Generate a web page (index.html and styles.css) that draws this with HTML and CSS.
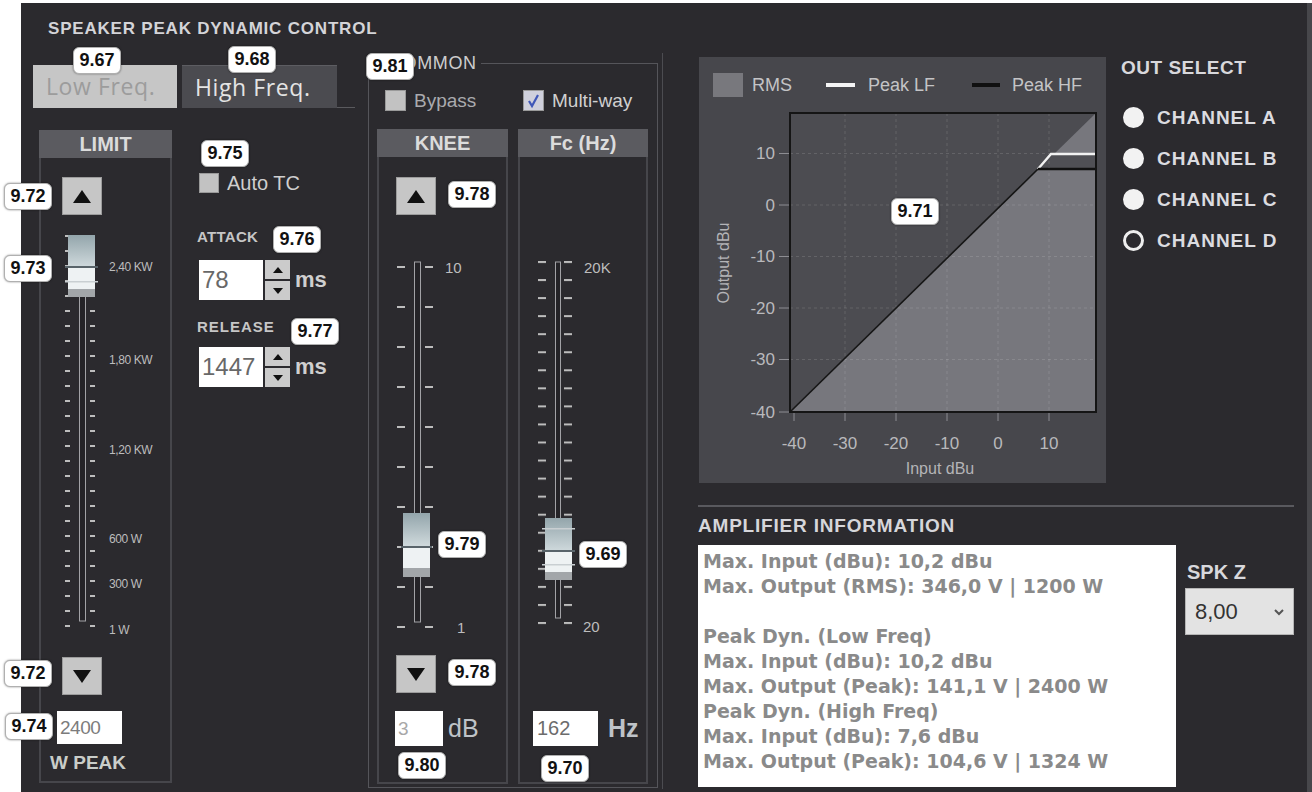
FILE: index.html
```html
<!DOCTYPE html>
<html lang="en">
<head>
    <meta charset="UTF-8">
    <title>Speaker Peak Dynamic Control</title>
    <link rel="stylesheet" href="styles.css">
</head>
<body>
<div class="screen">
    <div class="panel">
        <h1 class="title">SPEAKER PEAK DYNAMIC CONTROL</h1>
        <div class="main">

            <!-- left: peak limiter -->
            <section class="peak">
                <div class="tabs">
                    <div class="tab tab-low">Low Freq.</div>
                    <div class="tab tab-high">High Freq.</div>
                    <div class="tab-rest"></div>
                </div>
                <div class="peak-row">
                    <div class="strip strip-limit">
                        <div class="strip-head">LIMIT</div>
                        <div class="strip-body">
                            <div class="step step-up"><span class="tri-up"></span></div>
                            <svg class="fader" width="129" height="440" viewBox="0 0 129 440">
                                <defs>
                                    <pattern id="tickLimit" width="129" height="15" y="20" patternUnits="userSpaceOnUse">
                                        <rect x="24" y="0" width="5" height="2" fill="#bdbdbd"/>
                                        <rect x="49" y="0" width="5" height="2" fill="#bdbdbd"/>
                                    </pattern>
                                    <linearGradient id="capLimit" x1="0" y1="0" x2="0" y2="1">
                                        <stop offset="0" stop-color="#93a5ab"/>
                                        <stop offset="1" stop-color="#cfd9dc"/>
                                    </linearGradient>
                                </defs>
                                <rect x="0" y="20" width="129" height="394" fill="url(#tickLimit)"/>
                                <rect x="38.5" y="21" width="6" height="385" fill="#242327" stroke="#a2a2a6" stroke-width="1"/>
                                <g class="scale">
                                    <text x="68" y="52">2,40 KW</text>
                                    <text x="68" y="145">1,80 KW</text>
                                    <text x="68" y="235">1,20 KW</text>
                                    <text x="68" y="324">600 W</text>
                                    <text x="68" y="369">300 W</text>
                                    <text x="68" y="415">1 W</text>
                                </g>
                                <rect x="27" y="20" width="27" height="32" fill="url(#capLimit)"/>
                                <rect x="27" y="52" width="27" height="22" fill="#eef2f3"/>
                                <rect x="27" y="74" width="27" height="8" fill="#a2a6a9"/>
                                <rect x="24" y="51" width="33" height="2" fill="#59646a"/>
                                <rect x="24" y="66" width="33" height="1.5" fill="#c9cfd2"/>
                            </svg>
                            <div class="step step-down"><span class="tri-down"></span></div>
                            <div class="field field-watt">2400</div>
                            <div class="wpeak">W PEAK</div>
                        </div>
                    </div>

                    <div class="timing">
                        <div class="check"><span class="box"></span>Auto TC</div>
                        <div class="tlabel tlabel-attack">ATTACK</div>
                        <div class="spin-row spin-attack">
                            <div class="field field-time">78</div>
                            <div class="spin">
                                <span class="spin-half"><span class="tri-up tri-small"></span></span>
                                <span class="spin-half"><span class="tri-down tri-small"></span></span>
                            </div>
                            <span class="ms">ms</span>
                        </div>
                        <div class="tlabel tlabel-release">RELEASE</div>
                        <div class="spin-row spin-release">
                            <div class="field field-time">1447</div>
                            <div class="spin">
                                <span class="spin-half"><span class="tri-up tri-small"></span></span>
                                <span class="spin-half"><span class="tri-down tri-small"></span></span>
                            </div>
                            <span class="ms">ms</span>
                        </div>
                    </div>
                </div>
            </section>

            <!-- middle: common settings -->
            <div class="common-wrap">
                <fieldset class="common">
                    <legend>COMMON</legend>
                    <div class="opts">
                        <div class="opt opt-dim"><span class="box"></span>Bypass</div>
                        <div class="opt">
                            <span class="box box-on">
                                <svg width="17" height="17" viewBox="0 0 17 17"><polyline points="4,9 7,14 13,3" fill="none" stroke="#3f57b8" stroke-width="2.2"/></svg>
                            </span>Multi-way
                        </div>
                    </div>
                    <div class="strips">
                        <div class="strip strip-knee">
                            <div class="strip-head">KNEE</div>
                            <div class="strip-body">
                                <div class="step step-up step-knee"><span class="tri-up"></span></div>
                                <svg class="fader" width="127" height="440" viewBox="0 0 127 440">
                                    <defs>
                                        <pattern id="tickKnee" width="127" height="40" y="51" patternUnits="userSpaceOnUse">
                                            <rect x="18" y="0" width="8" height="2" fill="#bdbdbd"/>
                                            <rect x="46" y="0" width="8" height="2" fill="#bdbdbd"/>
                                        </pattern>
                                        <linearGradient id="capKnee" x1="0" y1="0" x2="0" y2="1">
                                            <stop offset="0" stop-color="#93a5ab"/>
                                            <stop offset="1" stop-color="#cfd9dc"/>
                                        </linearGradient>
                                    </defs>
                                    <rect x="0" y="51" width="127" height="362" fill="url(#tickKnee)"/>
                                    <rect x="35.5" y="47" width="6" height="360" fill="#242327" stroke="#a2a2a6" stroke-width="1"/>
                                    <g class="scale scale-big">
                                        <text x="66" y="52">10</text>
                                        <text x="78" y="412">1</text>
                                    </g>
                                    <rect x="24" y="298" width="27" height="33" fill="url(#capKnee)"/>
                                    <rect x="24" y="331" width="27" height="22" fill="#eef2f3"/>
                                    <rect x="24" y="353" width="27" height="9" fill="#a2a6a9"/>
                                    <rect x="22" y="331" width="31" height="2" fill="#59646a"/>
                                </svg>
                                <div class="step step-down step-knee"><span class="tri-down"></span></div>
                                <div class="unit-row unit-knee">
                                    <div class="field field-knee">3</div>
                                    <span class="unit">dB</span>
                                </div>
                            </div>
                        </div>
                        <div class="strip strip-fc">
                            <div class="strip-head">Fc (Hz)</div>
                            <div class="strip-body">
                                <svg class="fader fader-fc" width="126" height="440" viewBox="0 0 126 440">
                                    <defs>
                                        <pattern id="tickFc" width="126" height="18.05" y="46" patternUnits="userSpaceOnUse">
                                            <rect x="18" y="0" width="8" height="2" fill="#bdbdbd"/>
                                            <rect x="44" y="0" width="8" height="2" fill="#bdbdbd"/>
                                        </pattern>
                                        <linearGradient id="capFc" x1="0" y1="0" x2="0" y2="1">
                                            <stop offset="0" stop-color="#93a5ab"/>
                                            <stop offset="1" stop-color="#cfd9dc"/>
                                        </linearGradient>
                                    </defs>
                                    <rect x="0" y="46" width="126" height="366" fill="url(#tickFc)"/>
                                    <rect x="35.5" y="47" width="5" height="356" fill="#242327" stroke="#a2a2a6" stroke-width="1"/>
                                    <g class="scale scale-big">
                                        <text x="64" y="52">20K</text>
                                        <text x="63" y="411">20</text>
                                    </g>
                                    <rect x="25" y="303" width="27" height="33" fill="url(#capFc)"/>
                                    <rect x="25" y="336" width="27" height="21" fill="#eef2f3"/>
                                    <rect x="25" y="357" width="27" height="8" fill="#a2a6a9"/>
                                    <rect x="22" y="335" width="33" height="2" fill="#59646a"/>
                                    <rect x="22" y="313" width="33" height="1.5" fill="#c9cfd2"/>
                                    <rect x="22" y="349" width="33" height="1.5" fill="#c9cfd2"/>
                                </svg>
                                <div class="unit-row unit-fc">
                                    <div class="field field-fc">162</div>
                                    <span class="unit unit-bold">Hz</span>
                                </div>
                            </div>
                        </div>
                    </div>
                </fieldset>
            </div>

            <!-- right: transfer graph, outputs, amplifier -->
            <section class="side">
                <div class="side-top">
                    <div class="chart">
                        <svg width="407" height="426" viewBox="0 0 407 426">
                            <rect x="14" y="16" width="30" height="24" fill="#78787d"/>
                            <text x="53" y="34">RMS</text>
                            <line x1="127" y1="28" x2="156" y2="28" stroke="#f4f4f4" stroke-width="4"/>
                            <text x="169" y="34">Peak LF</text>
                            <line x1="273" y1="28" x2="301" y2="28" stroke="#101010" stroke-width="4"/>
                            <text x="313" y="34">Peak HF</text>

                            <rect x="91" y="56" width="306" height="299" fill="#4c4c51"/>
                            <polygon points="91,355 397,56 397,355" fill="#77777d"/>
                            <polygon points="339,112 352,97 397,97 397,112" fill="#505055"/>
                            <g class="grid">
                                <line x1="91" y1="96.5" x2="397" y2="96.5"/>
                                <line x1="91" y1="148" x2="397" y2="148"/>
                                <line x1="91" y1="199.5" x2="397" y2="199.5"/>
                                <line x1="91" y1="251" x2="397" y2="251"/>
                                <line x1="91" y1="302.5" x2="397" y2="302.5"/>
                                <line x1="146" y1="56" x2="146" y2="355"/>
                                <line x1="197" y1="56" x2="197" y2="355"/>
                                <line x1="248" y1="56" x2="248" y2="355"/>
                                <line x1="299" y1="56" x2="299" y2="355"/>
                                <line x1="350" y1="56" x2="350" y2="355"/>
                            </g>
                            <line x1="91" y1="355" x2="339" y2="112" stroke="#161616" stroke-width="1.6"/>
                            <polyline points="339,112 352,97 397,97" fill="none" stroke="#f2f2f2" stroke-width="2.4"/>
                            <line x1="339" y1="112" x2="397" y2="112" stroke="#111" stroke-width="2.4"/>
                            <rect x="91" y="56" width="306" height="299" fill="none" stroke="#151515" stroke-width="2"/>

                            <g class="ticks">
                                <line x1="80" y1="96.5" x2="90" y2="96.5"/>
                                <line x1="80" y1="148" x2="90" y2="148"/>
                                <line x1="80" y1="199.5" x2="90" y2="199.5"/>
                                <line x1="80" y1="251" x2="90" y2="251"/>
                                <line x1="80" y1="302.5" x2="90" y2="302.5"/>
                                <line x1="80" y1="355" x2="90" y2="355"/>
                                <line x1="95" y1="356" x2="95" y2="364"/>
                                <line x1="146" y1="356" x2="146" y2="364"/>
                                <line x1="197" y1="356" x2="197" y2="364"/>
                                <line x1="248" y1="356" x2="248" y2="364"/>
                                <line x1="299" y1="356" x2="299" y2="364"/>
                                <line x1="350" y1="356" x2="350" y2="364"/>
                            </g>
                            <g class="ylab">
                                <text x="76" y="102">10</text>
                                <text x="76" y="154">0</text>
                                <text x="76" y="205">-10</text>
                                <text x="76" y="257">-20</text>
                                <text x="76" y="308">-30</text>
                                <text x="76" y="361">-40</text>
                            </g>
                            <g class="xlab">
                                <text x="95" y="392">-40</text>
                                <text x="146" y="392">-30</text>
                                <text x="197" y="392">-20</text>
                                <text x="248" y="392">-10</text>
                                <text x="299" y="392">0</text>
                                <text x="350" y="392">10</text>
                            </g>
                            <text class="axis-name" x="241" y="417">Input dBu</text>
                            <text class="axis-name" x="0" y="0" transform="translate(30 206) rotate(-90)">Output dBu</text>
                        </svg>
                    </div>

                    <div class="outsel">
                        <h2>OUT SELECT</h2>
                        <div class="radios">
                            <div class="radio-row"><span class="radio"></span>CHANNEL A</div>
                            <div class="radio-row"><span class="radio"></span>CHANNEL B</div>
                            <div class="radio-row"><span class="radio"></span>CHANNEL C</div>
                            <div class="radio-row"><span class="radio radio-off"></span>CHANNEL D</div>
                        </div>
                    </div>
                </div>

                <div class="amp">
                    <h3>AMPLIFIER INFORMATION</h3>
                    <div class="amp-row">
                        <div class="info">
                            <div>Max. Input (dBu): 10,2 dBu</div>
                            <div>Max. Output (RMS): 346,0 V | 1200 W</div>
                            <div class="gap"></div>
                            <div>Peak Dyn. (Low Freq)</div>
                            <div>Max. Input (dBu): 10,2 dBu</div>
                            <div>Max. Output (Peak): 141,1 V | 2400 W</div>
                            <div>Peak Dyn. (High Freq)</div>
                            <div>Max. Input (dBu): 7,6 dBu</div>
                            <div>Max. Output (Peak): 104,6 V | 1324 W</div>
                        </div>
                        <div class="spk">
                            <div class="spk-label">SPK Z</div>
                            <div class="select">
                                <span>8,00</span>
                                <svg width="12" height="10" viewBox="0 0 12 10"><polyline points="2,3 6,7 10,3" fill="none" stroke="#555" stroke-width="2"/></svg>
                            </div>
                        </div>
                    </div>
                </div>
            </section>
        </div>
    </div>

    <!-- reference callouts -->
    <span class="badge b967">9.67</span>
    <span class="badge b968">9.68</span>
    <span class="badge b981">9.81</span>
    <span class="badge b975">9.75</span>
    <span class="badge b972a">9.72</span>
    <span class="badge b973">9.73</span>
    <span class="badge b976">9.76</span>
    <span class="badge b977">9.77</span>
    <span class="badge b978a">9.78</span>
    <span class="badge b971">9.71</span>
    <span class="badge b979">9.79</span>
    <span class="badge b969">9.69</span>
    <span class="badge b972b">9.72</span>
    <span class="badge b978b">9.78</span>
    <span class="badge b974">9.74</span>
    <span class="badge b980">9.80</span>
    <span class="badge b970">9.70</span>
</div>
</body>
</html>
```

FILE: styles.css
```css
* {
    box-sizing: border-box;
}

body {
    margin: 0;
    background: #fff;
    font-family: "Liberation Sans", Arial, sans-serif;
}

.screen {
    position: relative;
    width: 1312px;
    height: 792px;
    overflow: hidden;
}

.panel {
    margin: 3px 0 0 21px;
    width: 1291px;
    height: 789px;
    padding-top: 16px;
    background: #2b2a2e;
    border-right: 5px solid #47474b;
    color: #d2d2d6;
}

.title {
    margin: 0 0 0 27px;
    font-size: 17px;
    line-height: 20px;
    letter-spacing: 0.8px;
    font-weight: bold;
    color: #d4d4d8;
}

.main {
    display: flex;
    margin-top: 14px;
    height: 736px;
}

/* ---------- peak section ---------- */

.peak {
    margin-left: 12px;
    width: 322px;
}

.tabs {
    display: flex;
    margin-top: 12px;
    height: 43px;
}

.tab {
    height: 43px;
    padding-left: 13px;
    font-family: "Open Sans", sans-serif;
    font-size: 23px;
    line-height: 43px;
    letter-spacing: 0.6px;
}

.tab-low {
    width: 144px;
    background: #c6c6c6;
    color: #9c9c9c;
}

.tab-high {
    width: 155px;
    margin-left: 5px;
    background: #4b4b50;
    color: #e4e4e4;
    border-top: 1px solid #5d5d62;
}

.tab-rest {
    flex: 1;
    border-bottom: 1px solid #5a5a5e;
}

.peak-row {
    display: flex;
    margin-top: 22px;
}

.strip {
    display: flex;
    flex-direction: column;
}

.strip-limit {
    margin-left: 6px;
    width: 133px;
    height: 653px;
}

.strip-head {
    height: 28px;
    background: #5b5b60;
    text-align: center;
    font-size: 20px;
    font-weight: bold;
    line-height: 28px;
    color: #dcdcdc;
}

.strip-body {
    flex: 1;
    border: 2px solid #46464b;
    border-top: none;
}

.step {
    display: flex;
    align-items: center;
    justify-content: center;
    width: 40px;
    height: 38px;
    margin-left: 21px;
    background: #c6c6c6;
    border: 1px solid #9c9c9c;
}

.step-up {
    margin-top: 19px;
}

.step-knee {
    margin-left: 17px;
}

.step-knee.step-up {
    margin-top: 20px;
}

.tri-up {
    width: 0;
    height: 0;
    border-left: 9px solid transparent;
    border-right: 9px solid transparent;
    border-bottom: 13px solid #111;
}

.tri-down {
    width: 0;
    height: 0;
    border-left: 9px solid transparent;
    border-right: 9px solid transparent;
    border-top: 13px solid #111;
}

.tri-small {
    border-left-width: 5px;
    border-right-width: 5px;
    border-top-width: 6px;
    border-bottom-width: 6px;
}

.tri-up.tri-small {
    border-top-width: 0;
}

.tri-down.tri-small {
    border-bottom-width: 0;
}

.fader {
    display: block;
}

.scale text {
    font-size: 12px;
    letter-spacing: -0.4px;
    fill: #bdbdbd;
    dominant-baseline: central;
}

.scale-big text {
    font-size: 15px;
    letter-spacing: 0;
}

.step-down {
    margin-top: 2px;
}

.step-down.step-knee {
    margin-top: 0;
}

.field {
    background: #fff;
    color: #7c7c7c;
    padding-left: 3px;
}

.field-watt {
    width: 65px;
    height: 33px;
    margin: 16px 0 0 16px;
    font-size: 19px;
    line-height: 33px;
    letter-spacing: -0.5px;
}

.wpeak {
    margin: 8px 0 0 9px;
    font-size: 19px;
    font-weight: bold;
    line-height: 22px;
    color: #c9cdc9;
}

/* ---------- attack / release ---------- */

.timing {
    margin-left: 25px;
    padding-top: 43px;
}

.check {
    display: flex;
    align-items: center;
    gap: 8px;
    height: 20px;
    margin-left: 2px;
    font-size: 20px;
    color: #cfcfcf;
}

.box {
    display: flex;
    align-items: center;
    justify-content: center;
    width: 20px;
    height: 20px;
    background: #c2c2c2;
    border: 1px solid #9a9a9a;
}

.tlabel {
    font-size: 15px;
    font-weight: bold;
    line-height: 18px;
    letter-spacing: 0.3px;
    color: #c6c6c6;
}

.tlabel-attack {
    margin-top: 35px;
}

.tlabel-release {
    margin-top: 18px;
    letter-spacing: 1px;
}

.spin-row {
    display: flex;
    align-items: center;
    height: 40px;
}

.spin-attack {
    margin-top: 14px;
}

.spin-release {
    margin-top: 11px;
}

.field-time {
    width: 64px;
    height: 40px;
    margin-left: 2px;
    padding-left: 3px;
    font-size: 24px;
    line-height: 40px;
    color: #686868;
}

.spin {
    display: flex;
    flex-direction: column;
    gap: 2px;
    width: 25px;
    height: 40px;
    margin-left: 2px;
}

.spin-half {
    display: flex;
    align-items: center;
    justify-content: center;
    flex: 1;
    background: #cbcbcb;
}

.ms {
    margin-left: 5px;
    font-size: 22px;
    font-weight: bold;
    color: #cfcfcf;
}

/* ---------- common ---------- */

.common-wrap {
    margin-left: 13px;
    padding-right: 4px;
    border-right: 1px solid #4c4c51;
}

.common {
    margin: 0;
    padding: 0;
    width: 290px;
    height: 735px;
    min-width: 0;
    border: 1px solid #55555a;
}

.common legend {
    margin-left: 16px;
    padding: 0 4px;
    font-size: 18px;
    line-height: 20px;
    letter-spacing: 0.6px;
    color: #cdcdcd;
}

.opts {
    display: grid;
    grid-template-columns: 138px auto;
    margin-top: 17px;
    padding-left: 16px;
}

.opt {
    display: flex;
    align-items: center;
    gap: 8px;
    height: 21px;
    font-size: 19px;
    color: #d0d0d0;
}

.opt .box {
    width: 21px;
    height: 21px;
}

.opt-dim {
    color: #aaaaae;
}

.box-on {
    background: #cfd0dc;
}

.strips {
    display: flex;
    gap: 10px;
    margin-top: 18px;
    padding-left: 8px;
}

.strip-knee {
    width: 131px;
    height: 655px;
}

.strip-fc {
    width: 130px;
    height: 655px;
}

.fader-fc {
    margin-top: 58px;
}

.unit-row {
    display: flex;
    align-items: center;
    height: 35px;
}

.unit-knee {
    margin: 18px 0 0 16px;
}

.unit-fc {
    margin: 56px 0 0 13px;
}

.field-knee {
    width: 48px;
    height: 35px;
    font-size: 19px;
    line-height: 35px;
    color: #a8a8a8;
}

.field-fc {
    width: 65px;
    height: 35px;
    padding-left: 4px;
    font-size: 20px;
    line-height: 35px;
    color: #6c6c6c;
}

.unit {
    margin-left: 5px;
    font-size: 25px;
    color: #bfc3c8;
}

.unit-bold {
    margin-left: 10px;
    font-weight: bold;
}

/* ---------- graph side ---------- */

.side {
    margin-left: 36px;
    width: 607px;
}

.side-top {
    display: flex;
    height: 430px;
}

.chart {
    margin-top: 4px;
    width: 407px;
    height: 426px;
    background: #47474c;
}

.chart svg {
    display: block;
}

.chart text {
    font-size: 18px;
    fill: #c4c4c6;
}

.grid line {
    stroke: rgba(255, 255, 255, 0.13);
    stroke-width: 1;
    stroke-dasharray: 3 3;
}

.ticks line {
    stroke: #8d8d92;
    stroke-width: 1;
}

.ylab text {
    font-size: 17px;
    text-anchor: end;
    fill: #b9b9bc;
}

.xlab text {
    font-size: 17px;
    text-anchor: middle;
    fill: #b9b9bc;
}

.chart .axis-name {
    font-size: 16px;
    text-anchor: middle;
    fill: #b4b4b7;
}

.outsel {
    margin-left: 15px;
    padding-top: 4px;
}

.outsel h2 {
    margin: 0;
    font-size: 19px;
    line-height: 22px;
    letter-spacing: 0.5px;
    color: #d8d8dc;
}

.radios {
    margin-top: 18px;
}

.radio-row {
    display: flex;
    align-items: center;
    gap: 13px;
    height: 41px;
    font-size: 19px;
    font-weight: bold;
    letter-spacing: 1px;
    color: #dcdce0;
}

.radio {
    width: 21px;
    height: 21px;
    margin-left: 2px;
    border-radius: 50%;
    background: #f2f2f2;
}

.radio-off {
    background: #2b2a2e;
    border: 3px solid #eeeeee;
}

.amp {
    width: 596px;
    margin: 22px 0 0 -1px;
    border-top: 2px solid #59595e;
}

.amp h3 {
    margin: 9px 0 0;
    font-size: 19px;
    line-height: 20px;
    letter-spacing: 0.8px;
    color: #d6d6da;
}

.amp-row {
    display: flex;
    margin-top: 9px;
}

.info {
    width: 478px;
    height: 242px;
    padding: 4px 0 0 5px;
    background: #fff;
    font-family: "DejaVu Sans", sans-serif;
    font-size: 19px;
    font-weight: bold;
    line-height: 25px;
    color: #8a8a8a;
}

.info .gap {
    height: 25px;
}

.spk {
    margin-left: 9px;
}

.spk-label {
    margin-top: 15px;
    padding-left: 2px;
    font-size: 20px;
    font-weight: bold;
    line-height: 24px;
    color: #d8d8dc;
}

.select {
    display: flex;
    align-items: center;
    justify-content: space-between;
    width: 109px;
    height: 47px;
    margin-top: 4px;
    padding: 0 8px 0 9px;
    background: #e3e3e3;
    border: 1px solid #b5b5b5;
    font-size: 22px;
    color: #333;
}

/* ---------- callout badges ---------- */

.badge {
    position: absolute;
    width: 48px;
    height: 27px;
    background: #fff;
    border: 1px solid #b0b0b0;
    border-radius: 6px;
    box-shadow: 0 0 2px rgba(0, 0, 0, 0.5);
    font-size: 18px;
    font-weight: bold;
    line-height: 25px;
    text-align: center;
    color: #111;
}

.b967 { left: 73px; top: 47px; }
.b968 { left: 228px; top: 46px; }
.b981 { left: 366px; top: 53px; }
.b975 { left: 201px; top: 140px; }
.b972a { left: 4px; top: 183px; }
.b973 { left: 4px; top: 255px; }
.b976 { left: 273px; top: 226px; }
.b977 { left: 291px; top: 318px; }
.b978a { left: 448px; top: 181px; }
.b971 { left: 891px; top: 198px; }
.b979 { left: 438px; top: 531px; }
.b969 { left: 579px; top: 541px; }
.b972b { left: 4px; top: 660px; }
.b978b { left: 448px; top: 659px; }
.b974 { left: 5px; top: 713px; }
.b980 { left: 398px; top: 752px; }
.b970 { left: 541px; top: 755px; }
```
